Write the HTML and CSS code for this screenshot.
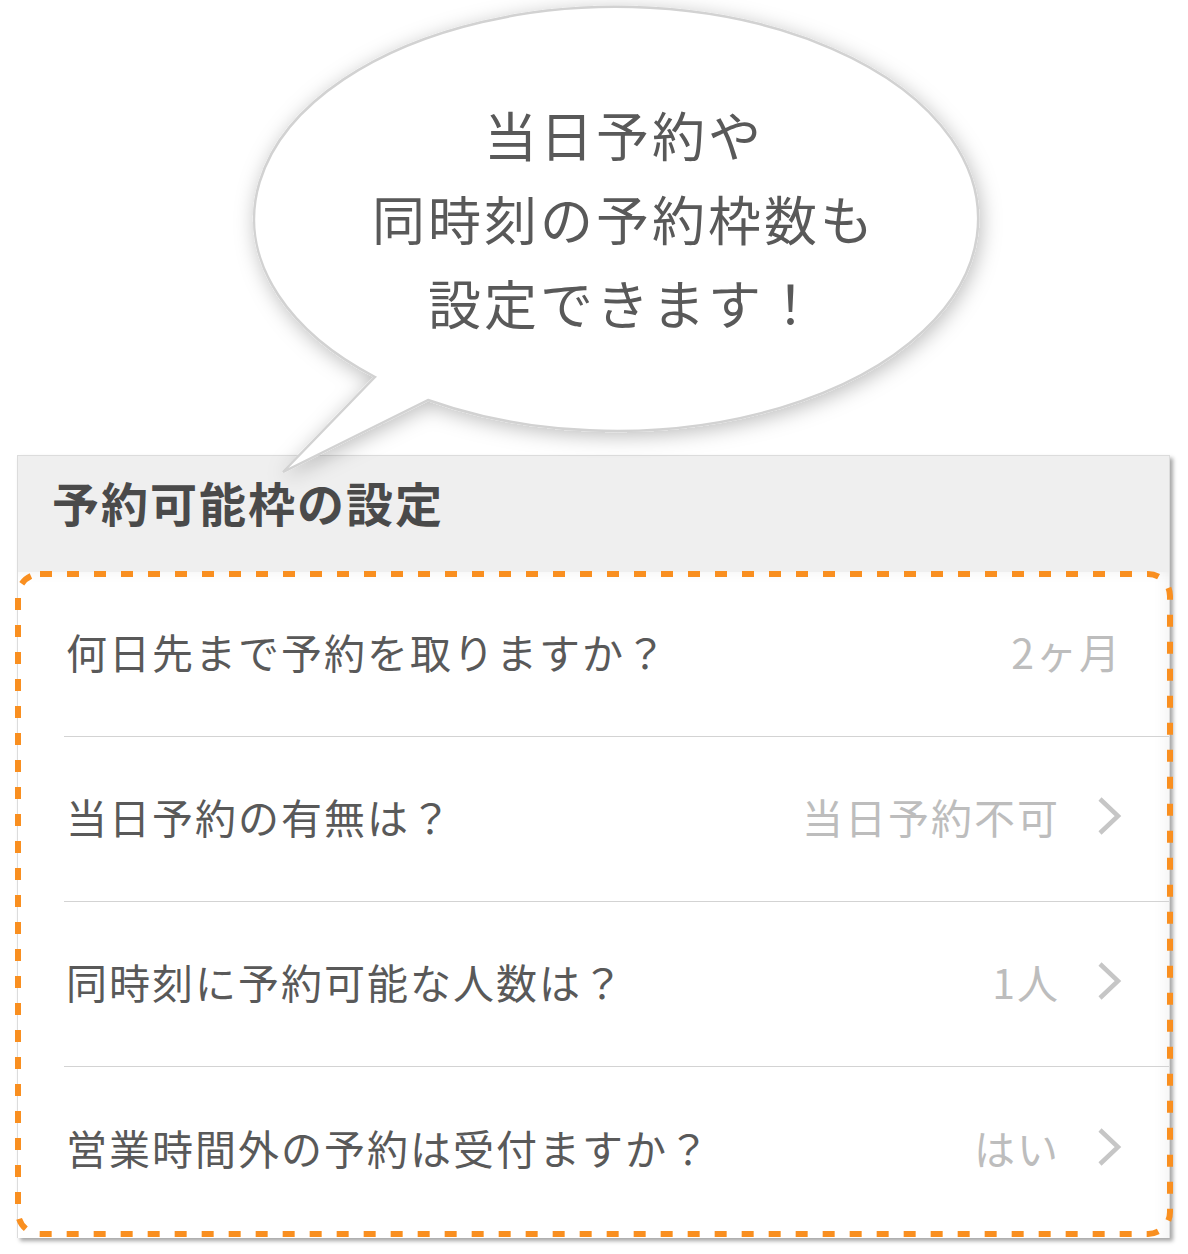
FILE: index.html
```html
<!DOCTYPE html>
<html lang="ja">
<head>
<meta charset="utf-8">
<title>予約可能枠の設定</title>
<link rel="stylesheet" href="styles.css">
</head>
<body>
<div class="page">
  <div class="bubble">
    <svg class="bubble-shape" width="1188" height="490" viewBox="0 0 1188 490">
      <defs>
        <filter id="bshadow" x="-10%" y="-10%" width="120%" height="130%">
          <feDropShadow dx="2" dy="4" stdDeviation="10" flood-color="#000" flood-opacity="0.26"/>
        </filter>
      </defs>
      <path d="M375 377 L283 472 L428 400 A362 212 0 1 0 375 377 Z" fill="#ffffff" stroke="#d2d2d2" stroke-width="2.5" filter="url(#bshadow)"/>
    </svg>
    <p class="bubble-text">当日予約や<br>同時刻の予約枠数も<br>設定できます！</p>
  </div>

  <section class="panel">
    <header class="panel-head">
      <h1 class="panel-title">予約可能枠の設定</h1>
    </header>
    <div class="list-wrap">
      <svg class="dash-frame" width="1158" height="666" viewBox="0 0 1158 666">
        <rect x="3" y="3" width="1152" height="660" rx="22" ry="22" fill="none" stroke="#f98f20" stroke-width="6" stroke-dasharray="12 15"/>
      </svg>
      <ul class="list">
        <li class="row">
          <span class="label">何日先まで予約を取りますか？</span>
          <span class="value">2ヶ月</span>
        </li>
        <li class="row">
          <span class="label">当日予約の有無は？</span>
          <span class="value">当日予約不可</span>
          <svg class="chev" width="26" height="40" viewBox="0 0 26 40"><polyline points="4,3 22,20 4,37" fill="none" stroke="#c6c6c6" stroke-width="4.5"/></svg>
        </li>
        <li class="row">
          <span class="label">同時刻に予約可能な人数は？</span>
          <span class="value">1人</span>
          <svg class="chev" width="26" height="40" viewBox="0 0 26 40"><polyline points="4,3 22,20 4,37" fill="none" stroke="#c6c6c6" stroke-width="4.5"/></svg>
        </li>
        <li class="row last">
          <span class="label">営業時間外の予約は受付ますか？</span>
          <span class="value">はい</span>
          <svg class="chev" width="26" height="40" viewBox="0 0 26 40"><polyline points="4,3 22,20 4,37" fill="none" stroke="#c6c6c6" stroke-width="4.5"/></svg>
        </li>
      </ul>
    </div>
  </section>
</div>
</body>
</html>
```

FILE: styles.css
```css
* { box-sizing: border-box; }
html, body { margin: 0; padding: 0; background: #ffffff; }
body {
  font-family: "Noto Sans CJK JP", "Noto Sans", sans-serif;
  width: 1188px;
  height: 1254px;
  overflow: hidden;
}
.page {
  display: flex;
  flex-direction: column;
}
.bubble {
  position: relative;
  z-index: 2;
  height: 455px;
}
.bubble-shape {
  position: absolute;
  left: 0;
  top: 0;
  overflow: visible;
}
.bubble-text {
  position: relative;
  margin: 0 0 0 262px;
  width: 724px;
  padding-top: 92px;
  text-align: center;
  font-size: 53px;
  line-height: 84px;
  letter-spacing: 3px;
  color: #595959;
}
.panel {
  position: relative;
  z-index: 1;
  margin-left: 17px;
  width: 1153px;
  height: 783px;
  background: #ffffff;
  border: 1px solid #dcdcdc;
  box-shadow: 3px 3px 4px rgba(0, 0, 0, 0.35);
}
.panel-head {
  height: 116px;
  background: #efefef;
  padding: 16px 0 0 34px;
}
.panel-title {
  margin: 0;
  font-size: 47px;
  font-weight: 700;
  line-height: 60px;
  color: #4a4a4a;
  letter-spacing: 2px;
}
.list-wrap {
  position: relative;
  height: 666px;
  background: #ffffff;
  box-shadow: inset -14px 0 16px -12px rgba(0, 0, 0, 0.06), inset 0 12px 14px -12px rgba(0, 0, 0, 0.05);
}
.dash-frame {
  position: absolute;
  left: -3px;
  top: -1px;
  pointer-events: none;
}
.list {
  list-style: none;
  margin: 0;
  padding: 0;
}
.row {
  display: flex;
  align-items: center;
  height: 165px;
  margin-left: 46px;
  padding: 0 47px 6px 2px;
  border-bottom: 1.5px solid #d3d3d3;
}
.row.last { border-bottom: none; }
.label {
  flex: 1;
  font-size: 41px;
  color: #595959;
  letter-spacing: 2px;
}
.value {
  font-size: 41px;
  color: #bdbdbd;
  letter-spacing: 2px;
}
.chev {
  margin-left: 36px;
  margin-right: 0;
  flex: none;
}
```
